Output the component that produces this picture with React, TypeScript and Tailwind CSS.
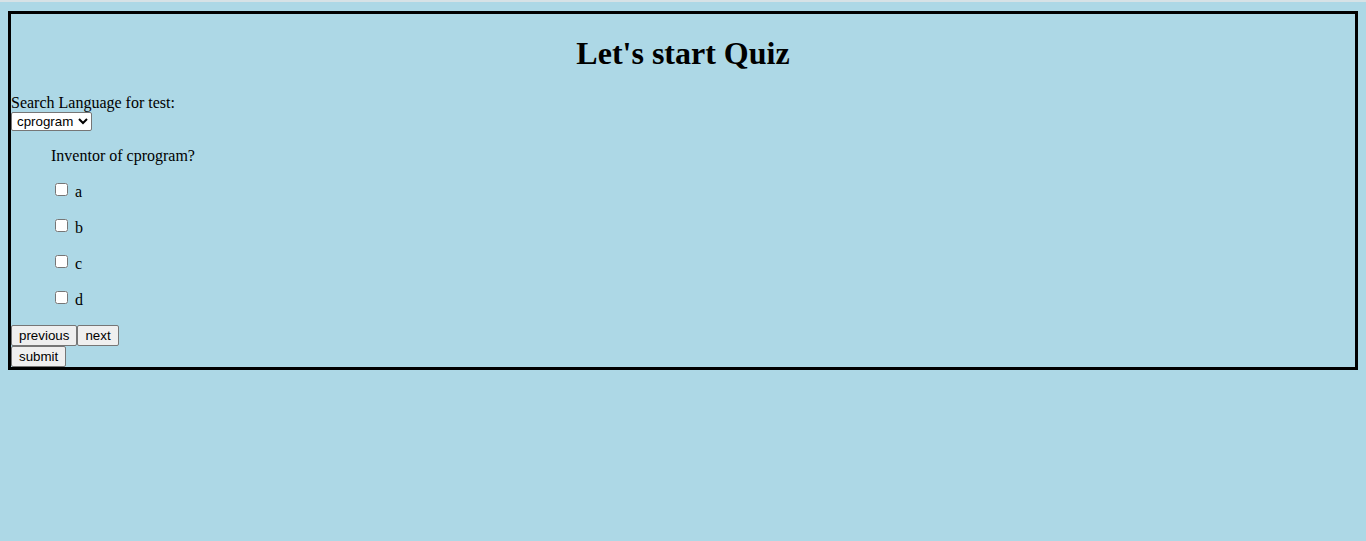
import React, { useState } from "react";

const OPTIONS = ["a", "b", "c", "d"];

const btn =
  "h-[21px] px-[7px] bg-[#efefef] border border-[#767676] rounded-[2px] text-[13.33px] leading-none text-black font-['Liberation_Sans',Arial,sans-serif]";

export default function App() {
  const [lang, setLang] = useState("cprogram");
  const [checked, setChecked] = useState<string[]>([]);

  const toggle = (o: string) =>
    setChecked((c) => (c.includes(o) ? c.filter((x) => x !== o) : [...c, o]));

  return (
    <div className="min-h-[541px] bg-[#add8e6] text-black font-['Liberation_Serif','Times_New_Roman',serif] text-[16px]">
      <div className="h-[2px] bg-[#d7e2e6]" />
      <div className="px-2 pt-[9px]">
        <div className="border-[3px] border-black">
          <h1 className="text-center text-[32px] font-bold leading-[37px] mt-[21px] mb-[22px]">
            Let's start Quiz
          </h1>
          <label className="block leading-[18px]">Search Language for test:</label>
          <select
            value={lang}
            onChange={(e) => setLang(e.target.value)}
            className="block h-[19px] w-[81px] bg-white border border-[#767676] rounded-[2px] text-[13.33px] leading-none pl-[1px] pr-0 font-['Liberation_Sans',Arial,sans-serif] appearance-auto"
          >
            <option value="cprogram">cprogram</option>
            <option value="java">java</option>
            <option value="python">python</option>
          </select>

          <div className="pl-10">
            <p className="my-4 leading-[18px]">Inventor of cprogram?</p>
            {OPTIONS.map((o) => (
              <p key={o} className="my-4 h-[20px] flex items-start">
                <input
                  type="checkbox"
                  checked={checked.includes(o)}
                  onChange={() => toggle(o)}
                  className="w-[13px] h-[13px] ml-[4px] mr-[3px] mt-[2px] mb-0 appearance-auto"
                />
                <span className="ml-[4px] pt-[2px] leading-[18px]">{o}</span>
              </p>
            ))}
          </div>

          <div className="flex">
            <button className={btn}>previous</button>
            <button className={btn}>next</button>
          </div>
          <div className="flex">
            <button className={btn}>submit</button>
          </div>
        </div>
      </div>
    </div>
  );
}
